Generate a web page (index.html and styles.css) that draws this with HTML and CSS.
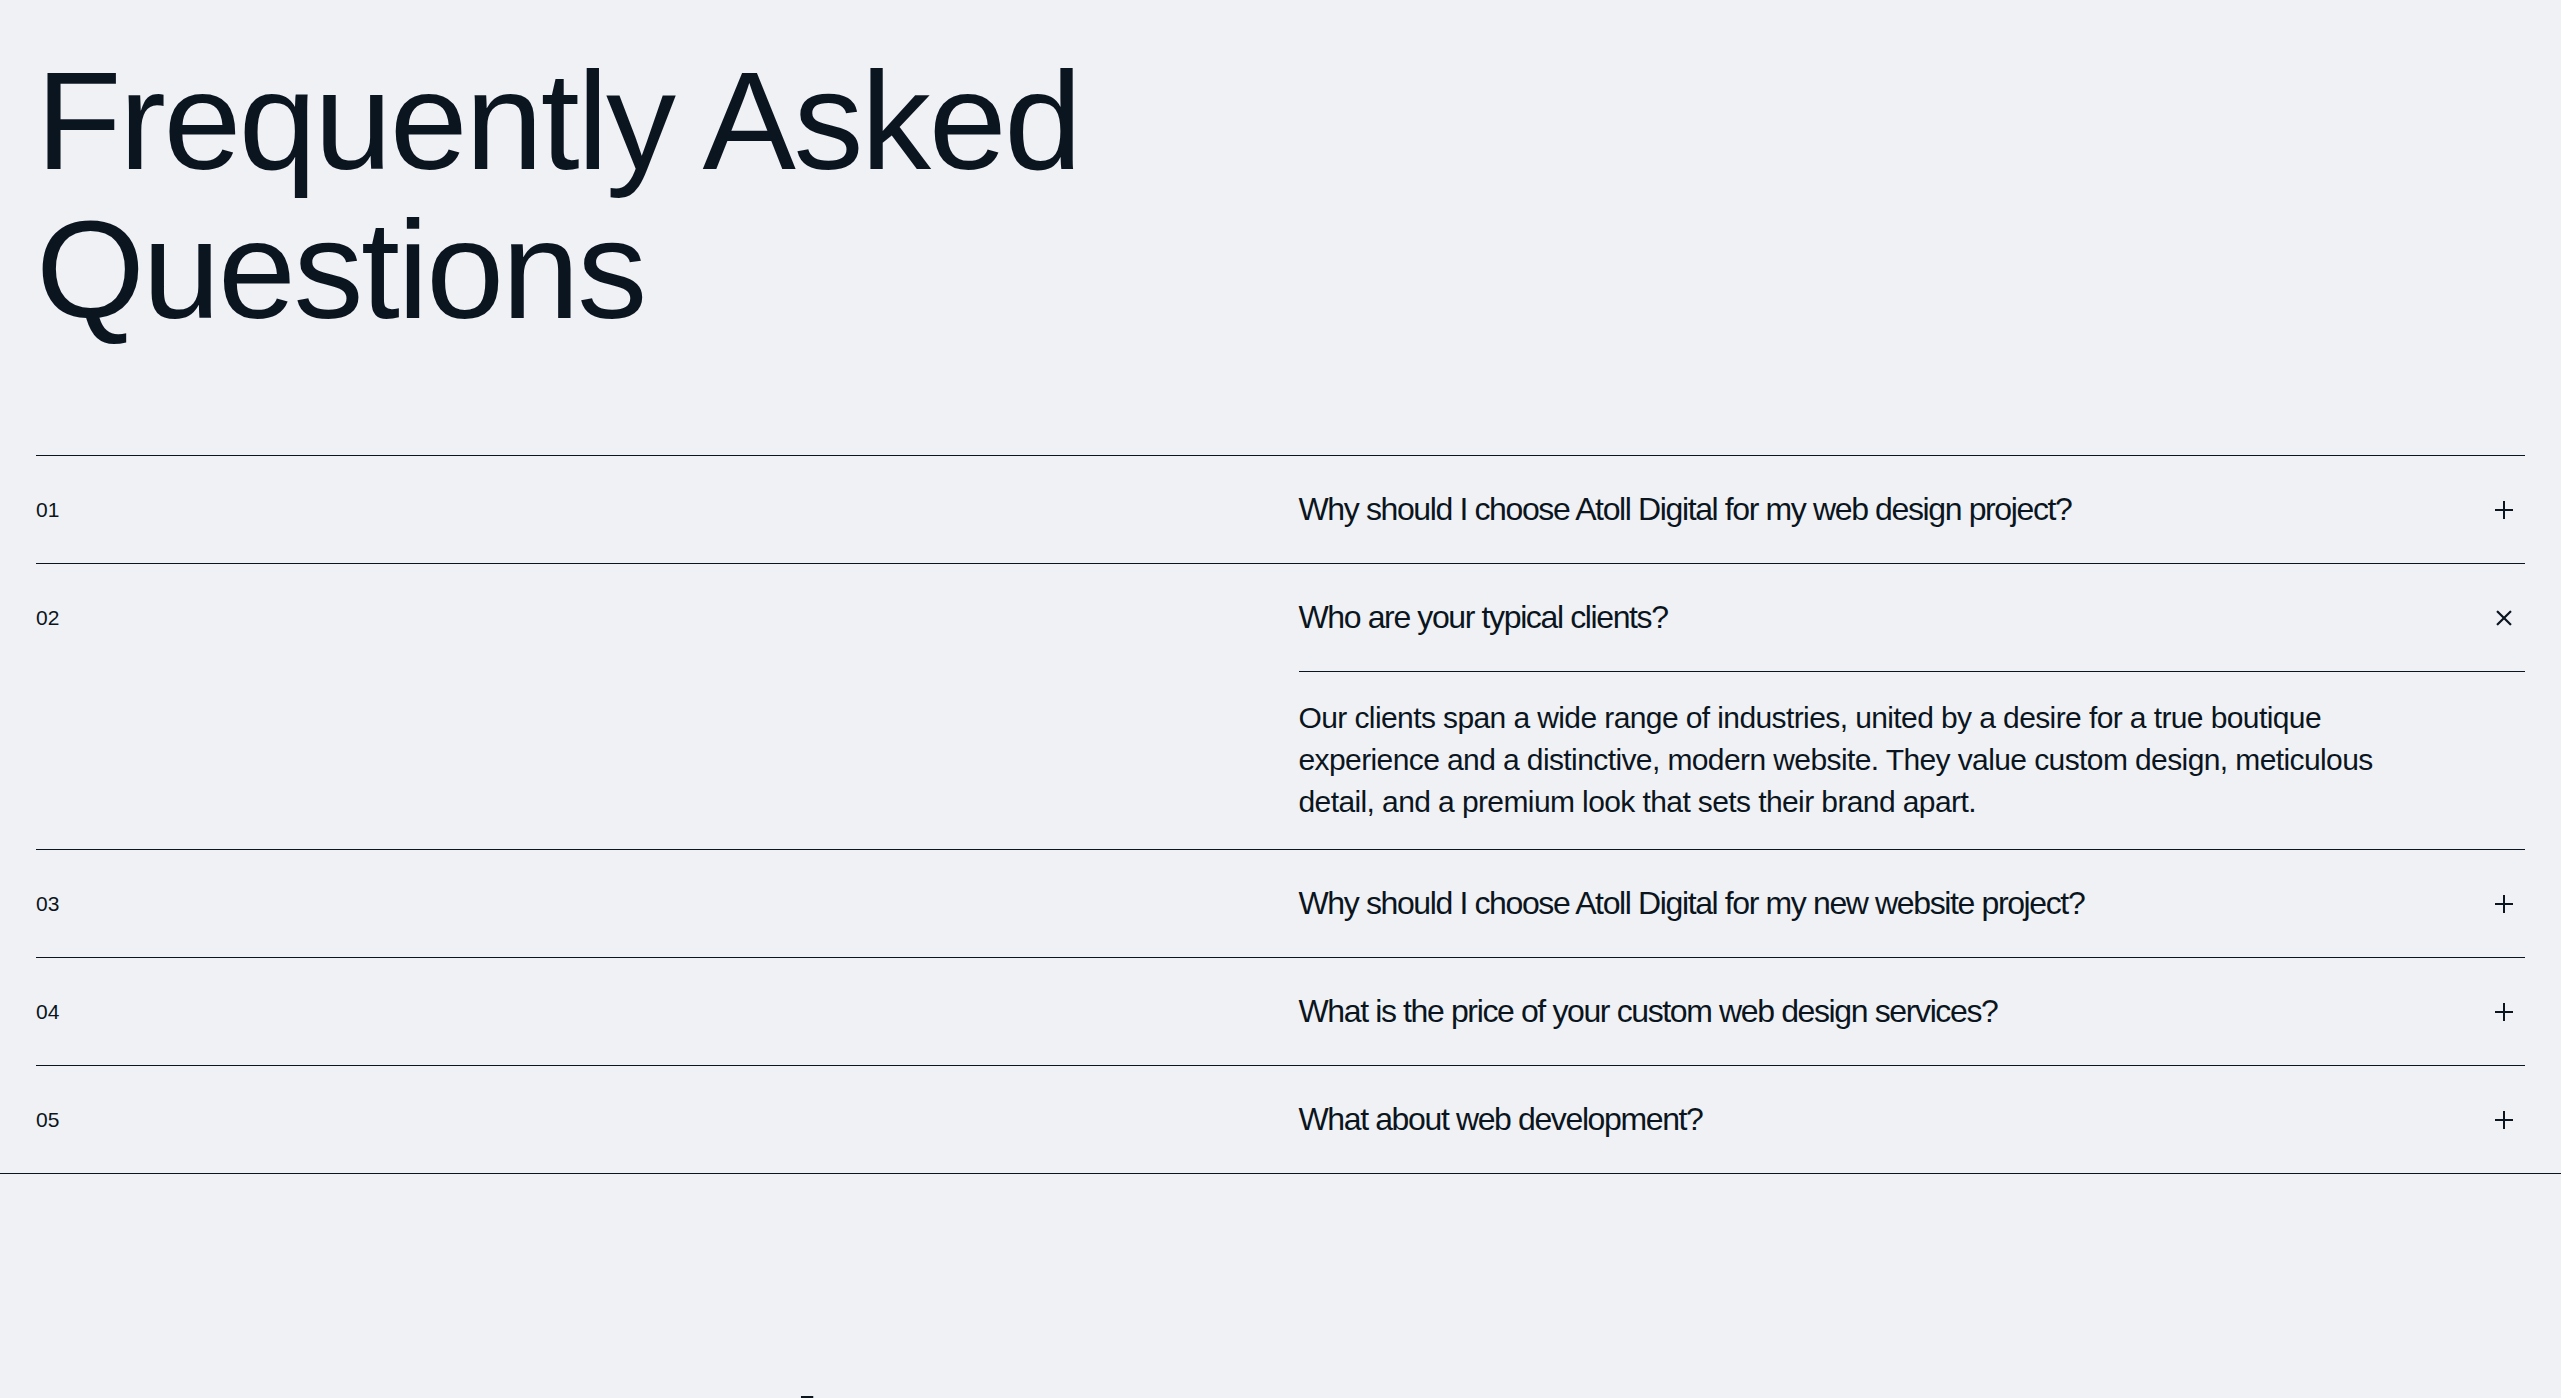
FILE: index.html
```html
<!DOCTYPE html>
<html lang="en">
<head>
<meta charset="utf-8">
<title>Frequently Asked Questions</title>
<link rel="stylesheet" href="styles.css">
</head>
<body>
<section class="faq">
  <h1 class="faq-title">Frequently Asked<br>Questions</h1>
  <div class="faq-list">
    <div class="faq-item">
      <span class="faq-num">01</span>
      <div class="faq-body">
        <div class="faq-head">
          <span class="faq-q">Why should I choose Atoll Digital for my web design project?</span>
          <span class="faq-icon"><svg viewBox="0 0 18 18" width="18" height="18"><path d="M9 0v18M0 9h18" stroke="currentColor" stroke-width="2" fill="none"/></svg></span>
        </div>
      </div>
    </div>
    <div class="faq-item is-open">
      <span class="faq-num">02</span>
      <div class="faq-body">
        <div class="faq-head">
          <span class="faq-q">Who are your typical clients?</span>
          <span class="faq-icon"><svg class="icon-close" viewBox="0 0 18 18" width="18" height="18"><path d="M9 0v18M0 9h18" stroke="currentColor" stroke-width="2" fill="none"/></svg></span>
        </div>
        <div class="faq-answer">
          <p>Our clients span a wide range of industries, united by a desire for a true boutique experience and a distinctive, modern website. They value custom design, meticulous detail, and a premium look that sets their brand apart.</p>
        </div>
      </div>
    </div>
    <div class="faq-item">
      <span class="faq-num">03</span>
      <div class="faq-body">
        <div class="faq-head">
          <span class="faq-q">Why should I choose Atoll Digital for my new website project?</span>
          <span class="faq-icon"><svg viewBox="0 0 18 18" width="18" height="18"><path d="M9 0v18M0 9h18" stroke="currentColor" stroke-width="2" fill="none"/></svg></span>
        </div>
      </div>
    </div>
    <div class="faq-item">
      <span class="faq-num">04</span>
      <div class="faq-body">
        <div class="faq-head">
          <span class="faq-q">What is the price of your custom web design services?</span>
          <span class="faq-icon"><svg viewBox="0 0 18 18" width="18" height="18"><path d="M9 0v18M0 9h18" stroke="currentColor" stroke-width="2" fill="none"/></svg></span>
        </div>
      </div>
    </div>
    <div class="faq-item">
      <span class="faq-num">05</span>
      <div class="faq-body">
        <div class="faq-head">
          <span class="faq-q">What about web development?</span>
          <span class="faq-icon"><svg viewBox="0 0 18 18" width="18" height="18"><path d="M9 0v18M0 9h18" stroke="currentColor" stroke-width="2" fill="none"/></svg></span>
        </div>
      </div>
    </div>
  </div>
</section>
<section class="next">
  <h2 class="next-title">Our Approach</h2>
</section>
</body>
</html>
```
FILE: styles.css
```css
* { box-sizing: border-box; }

body {
  margin: 0;
  background: #eff1f5;
  color: #0b1520;
  font-family: "Liberation Sans", Arial, sans-serif;
  overflow: hidden;
}

.faq {
  padding-top: 46px;
  border-bottom: 1px solid #0b1520;
}

.faq-title {
  margin: 0 36px;
  font-size: 140px;
  line-height: 149px;
  font-weight: 400;
  letter-spacing: -0.017em;
}

.faq-list {
  margin: 111px 36px 0;
}

.faq-item {
  display: grid;
  grid-template-columns: 1fr 1fr;
  column-gap: 36px;
  border-top: 1px solid #0b1520;
}

.faq-num {
  height: 107px;
  display: flex;
  align-items: center;
  font-size: 21px;
}

.faq-head {
  height: 107px;
  display: flex;
  align-items: center;
  justify-content: space-between;
}

.faq-q {
  font-size: 32px;
  letter-spacing: -0.043em;
}

.faq-icon {
  width: 42px;
  height: 42px;
  display: flex;
  align-items: center;
  justify-content: center;
}

.icon-close {
  transform: rotate(45deg);
  width: 20px;
  height: 20px;
}

.faq-answer {
  border-top: 1px solid #0b1520;
  padding: 25px 0 26px;
}

.faq-answer p {
  margin: 0;
  max-width: 1110px;
  font-size: 30px;
  line-height: 42px;
  letter-spacing: -0.02em;
}

.next {
  padding: 200px 36px 0;
}

.next-title {
  margin: 0;
  font-size: 140px;
  line-height: 149px;
  font-weight: 400;
  letter-spacing: -0.02em;
}
```
